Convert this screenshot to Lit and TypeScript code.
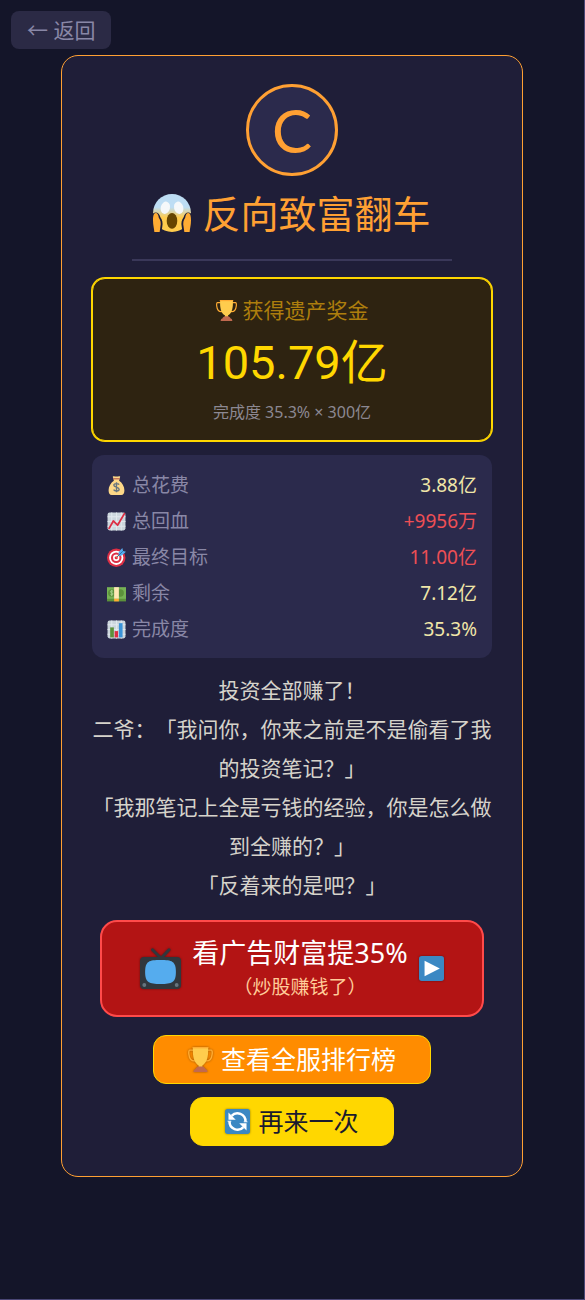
import { LitElement, html, css, svg, TemplateResult } from "lit";
import { customElement, property } from "lit/decorators.js";

const glyphs: Record<string, TemplateResult> = {
  scream: svg`
    <defs>
      <linearGradient id="face" x1="0" y1="0" x2="0" y2="1">
        <stop offset="0.35" stop-color="#bdddf4"/><stop offset="0.62" stop-color="#ffcc4d"/>
      </linearGradient>
    </defs>
    <circle cx="18" cy="18" r="18" fill="url(#face)"/>
    <path fill="#1f1e38" d="M0 18.500c3-2 6-.5 7 3.500 1.800 2.500 2.600 5.500 1.800 9L8 36H0zM36 18.500c-3-2-6-.5-7 3.500-1.800 2.500-2.600 5.500-1.800 9l.8 5h8z"/>
    <ellipse cx="18" cy="25.500" rx="5" ry="7.500" fill="#664500"/>
    <ellipse cx="11.700" cy="13" rx="4.400" ry="5.900" transform="rotate(14 11.700 13)" fill="#f5f8fa"/>
    <ellipse cx="24.300" cy="13" rx="4.400" ry="5.900" transform="rotate(-14 24.300 13)" fill="#f5f8fa"/>
    <path fill="#ffac33" d="M1.300 36c-.2-3-1.300-7-1.300-11 0-4 .7-7 2.500-7 2 0 2.700 2 3 4.500 1.700 2.500 2.300 5 1.500 8.500L6.300 36zM34.700 36c.2-3 1.300-7 1.300-11 0-4-.7-7-2.500-7-2 0-2.700 2-3 4.500-1.700 2.500-2.300 5-1.500 8.500l.7 5z"/>`,
  trophy: svg`
    <path fill="none" stroke="#ffac33" stroke-width="2" d="M8 4.500H2.500C0 4.500 1 15 4 18c2 2 6 2 7.500 1.500M28 4.500h5.500C36 4.500 35 15 32 18c-2 2-6 2-7.500 1.500"/>
    <path fill="#ffac33" d="M15.500 21h5v9h-5z"/>
    <path fill="#ffcc4d" d="M7 1h22v5c0 11-3.500 18-8.500 20.500V29h-5v-2.500C10.500 24 7 17 7 6z"/>
    <path fill="#ffac33" d="M6.500 0h23v2h-23z"/>
    <path fill="#c1694f" d="M15 28h6c2 1 3.500 2 4 3.500 2 .5 3 2 3 4.500H8c0-2.500 1-4 3-4.500.5-1.500 2-2.500 4-3.500z"/>`,
  bag: svg`
    <path fill="#fdd888" d="M12 4c-1-2-2-4 1-3.500 3 .5 7 .5 10 0 3-.5 2 1.500 1 3.500l-1 5c6 4 10 11 10 18 0 6-2 9-6 9H9c-4 0-6-3-6-9 0-7 4-14 10-18z"/>
    <path fill="#bf6952" d="M12 4h12v2.500H12z"/>
    <path fill="none" stroke="#67757f" stroke-width="2.600" d="M23 16.500c-2-3-10-2.500-10 1 0 4 10 3 10 7.500 0 4-8 4.500-10.500 1M18 12v19"/>`,
  rise: svg`
    <rect x="1" y="1" width="34" height="34" rx="4" fill="#ccd6dd"/>
    <path stroke="#e1e8ed" stroke-width="2" d="M1 9h34M1 18h34M1 27h34M9 1v34M18 1v34M27 1v34"/>
    <path fill="none" stroke="#dd2e44" stroke-width="3.400" stroke-linecap="round" stroke-linejoin="round" d="M4 31l8-14 8 8L33 3"/>`,
  target: svg`
    <circle cx="17.500" cy="18.500" r="17.500" fill="#dd2e44"/><circle cx="17.500" cy="18.500" r="13.500" fill="#fff"/>
    <circle cx="17.500" cy="18.500" r="10" fill="#dd2e44"/><circle cx="17.500" cy="18.500" r="6" fill="#fff"/>
    <circle cx="17.500" cy="18.500" r="3" fill="#dd2e44"/>
    <path stroke="#ffac33" stroke-width="2" d="M18 18l9-9"/>
    <path fill="#55acee" d="M22 8l7-8 1.500 5.500L36 7l-8 7-6 1z"/><path stroke="#226699" stroke-width="1.500" d="M19 17L30 6"/>`,
  cash: svg`
    <path fill="#77b255" d="M0 6h36v25H0z"/><path fill="#5c913b" d="M0 28h36v5H0z"/>
    <circle cx="25" cy="17" r="7" fill="#5c913b"/><circle cx="9" cy="17" r="7" fill="#5c913b"/>
    <path fill="none" stroke="#a7d28b" stroke-width="1.800" d="M11.500 14c-2-2-5-1-5 .8 0 2.500 5 1.700 5 4 0 2-3.500 2.500-5 .7M9 11v12"/>
    <path fill="#ffe8b6" d="M13.500 6h9v22h-9z"/><path fill="#ffac33" d="M13.500 28h9v5h-9z"/>`,
  bars: svg`
    <rect x="1" y="1" width="34" height="34" rx="4" fill="#ccd6dd"/>
    <path stroke="#e1e8ed" stroke-width="2" d="M1 9h34M1 18h34M1 27h34M9 1v34M18 1v34M27 1v34"/>
    <path fill="#5c913b" d="M6 14h7v19H6z"/><path fill="#dd2e44" d="M14.500 21h6.500v12h-6.500z"/><path fill="#3b94d9" d="M22.500 6h7v27h-7z"/>`,
  tv: svg`
    <path fill="none" stroke="#31373d" stroke-width="2.600" stroke-linecap="round" d="M11 1.500l7.500 7.500 7-7.500"/>
    <rect x="0" y="8" width="36" height="28" rx="3.500" fill="#31373d"/>
    <path fill="#55acee" d="M18 10.500c10 0 13.500 1 13.500 10.500S28 31.500 18 31.500 4.500 30.500 4.500 21 8 10.500 18 10.500z"/>
    <circle cx="3.800" cy="32.500" r="1.700" fill="#66757f"/><circle cx="32.200" cy="32.500" r="1.700" fill="#66757f"/>`,
  play: svg`
    <rect width="36" height="36" rx="4" fill="#3b88c3"/><path fill="#fff" d="M8 7l22 11L8 29z"/>`,
  reload: svg`
    <rect width="36" height="36" rx="4" fill="#3b88c3"/>
    <path fill="none" stroke="#fff" stroke-width="3.600" d="M9.500 10A11.500 11.500 0 0 1 29.500 18M26.500 26A11.500 11.500 0 0 1 6.500 18"/>
    <path fill="#fff" d="M5 5v10.500h10.500zM31 31V20.500H20.500zM27 17.500h5l.5 1.500H27zM9 18.500H4L3.500 17H9z"/>`,
};

@customElement("emoji-icon")
export class EmojiIcon extends LitElement {
  @property() name = "";
  static styles = css`
    :host { display: inline-block; width: 1em; height: 1em; flex: none; }
    svg { display: block; width: 100%; height: 100%; }
  `;
  render() {
    return html`<svg viewBox="0 0 36 36" aria-hidden="true">${glyphs[this.name]}</svg>`;
  }
}

interface Stat { icon: string; label: string; value: string; alert?: boolean }

@customElement("app-root")
export class AppRoot extends LitElement {
  private stats: Stat[] = [
    { icon: "bag", label: "总花费", value: "3.88亿" },
    { icon: "rise", label: "总回血", value: "+9956万", alert: true },
    { icon: "target", label: "最终目标", value: "11.00亿", alert: true },
    { icon: "cash", label: "剩余", value: "7.12亿" },
    { icon: "bars", label: "完成度", value: "35.3%" },
  ];

  private story = [
    "投资全部赚了！",
    "二爷：「我问你，你来之前是不是偷看了我的投资笔记？」",
    "「我那笔记上全是亏钱的经验，你是怎么做到全赚的？」",
    "「反着来的是吧？」",
  ];

  static styles = css`
    :host {
      display: block;
      box-sizing: border-box;
      min-height: 100vh;
      background: #141529;
      border: solid #4a4675;
      border-width: 0 1px 1px 0;
      font-family: "Noto Sans", "Noto Sans CJK SC", sans-serif;
      text-spacing-trim: space-all;
    }
    button { font: inherit; cursor: pointer; }
    .top { display: flex; padding: 11px 11px 6px; }
    .back {
      border: 0;
      border-radius: 8px;
      padding: 0 16px;
      background: #2b2a45;
      color: #8987a6;
      font-size: 21px;
      line-height: 38px;
    }
    .card {
      display: flex;
      flex-direction: column;
      align-items: center;
      margin: 0 61px;
      padding: 28px 30px 30px;
      border: 1px solid #ffa033;
      border-radius: 17px;
      background: #1f1e38;
    }
    .grade {
      display: grid;
      place-items: center;
      box-sizing: border-box;
      width: 92px;
      height: 92px;
      border: 3px solid #ffa033;
      border-radius: 50%;
      background: #2b2a4c;
      color: #ffa033;
      font-family: Lato, sans-serif;
      font-size: 60px;
      line-height: 86px;
    }
    h1 {
      display: flex;
      align-items: center;
      gap: 11px;
      margin: 13px 0 22px;
      color: #ffa033;
      font-size: 38px;
      font-weight: 400;
      line-height: 48px;
    }
    .rule { width: 80%; height: 2px; margin: 0; border: 0; background: #3a3859; }
    .bonus {
      box-sizing: border-box;
      align-self: stretch;
      margin-top: 17px;
      padding: 15px 16px;
      border: 1px solid #ffd700;
      border-radius: 13px;
      box-shadow: 0 0 0 1px #ffd700;
      background: #2e2311;
      text-align: center;
    }
    .bonus p { margin: 0; }
    .bonus .label {
      display: flex;
      align-items: center;
      justify-content: center;
      gap: 6px;
      color: #ad7e0d;
      font-size: 21px;
      line-height: 32px;
    }
    .bonus .amount {
      color: #ffd700;
      font-family: Roboto, "Noto Sans CJK SC", sans-serif;
      font-size: 47px;
      line-height: 74px;
    }
    .bonus .note { color: #8c8892; font-size: 16px; line-height: 25px; }
    .stats {
      box-sizing: border-box;
      align-self: stretch;
      margin: 14px 0 13px;
      padding: 12px 15px 11px;
      border-radius: 12px;
      background: #2b2a4c;
      font-size: 19px;
      line-height: 36px;
    }
    .row { display: flex; justify-content: space-between; }
    .stats dt { display: flex; align-items: center; gap: 6px; color: #8987a6; }
    .stats dd { margin: 0; color: #f0e6a8; }
    .stats dd.alert { color: #ee4f55; }
    .story {
      color: #d6d3cb;
      font-size: 21px;
      line-height: 39px;
      text-align: center;
    }
    .story p { margin: 0; }
    .ad {
      display: flex;
      align-items: center;
      justify-content: center;
      gap: 11px;
      box-sizing: border-box;
      width: 96%;
      margin-top: 15px;
      padding: 12px 16px;
      border: 2px solid #ff4a4a;
      border-radius: 17px;
      background: #b31414;
      color: #fff;
    }
    .ad .copy { display: grid; }
    .ad .main { font-size: 27px; line-height: 37px; }
    .ad .sub { color: #ffcc99; font-size: 19px; line-height: 32px; }
    .ad .tv { font-size: 41px; }
    .ad .play { font-size: 25px; }
    .action {
      display: flex;
      align-items: center;
      gap: 8px;
      padding: 0 34px;
      border: 1px solid #ffd700;
      border-radius: 13px;
      font-size: 25px;
      line-height: 47px;
    }
    .ad emoji-icon, .action emoji-icon { filter: drop-shadow(0 0 1px rgba(0, 0, 0, 0.4)); }
    .rank { margin: 18px 0 13px; background: #ff8c00; color: #fff; }
    .again { background: #ffd700; color: #1a1a2e; }
  `;

  render() {
    return html`
      <nav class="top"><button class="back" type="button">← 返回</button></nav>
      <main class="card">
        <div class="grade">C</div>
        <h1><emoji-icon name="scream"></emoji-icon>反向致富翻车</h1>
        <hr class="rule" />
        <section class="bonus">
          <p class="label"><emoji-icon name="trophy"></emoji-icon>获得遗产奖金</p>
          <p class="amount">105.79亿</p>
          <p class="note">完成度 35.3% × 300亿</p>
        </section>
        <dl class="stats">
          ${this.stats.map((s) => html`
            <div class="row">
              <dt><emoji-icon name=${s.icon}></emoji-icon>${s.label}</dt>
              <dd class=${s.alert ? "alert" : ""}>${s.value}</dd>
            </div>`)}
        </dl>
        <section class="story">${this.story.map((line) => html`<p>${line}</p>`)}</section>
        <button class="ad" type="button">
          <emoji-icon class="tv" name="tv"></emoji-icon>
          <span class="copy">
            <span class="main">看广告财富提35%</span>
            <span class="sub">（炒股赚钱了）</span>
          </span>
          <emoji-icon class="play" name="play"></emoji-icon>
        </button>
        <button class="action rank" type="button"><emoji-icon name="trophy"></emoji-icon>查看全服排行榜</button>
        <button class="action again" type="button"><emoji-icon name="reload"></emoji-icon>再来一次</button>
      </main>
    `;
  }
}
